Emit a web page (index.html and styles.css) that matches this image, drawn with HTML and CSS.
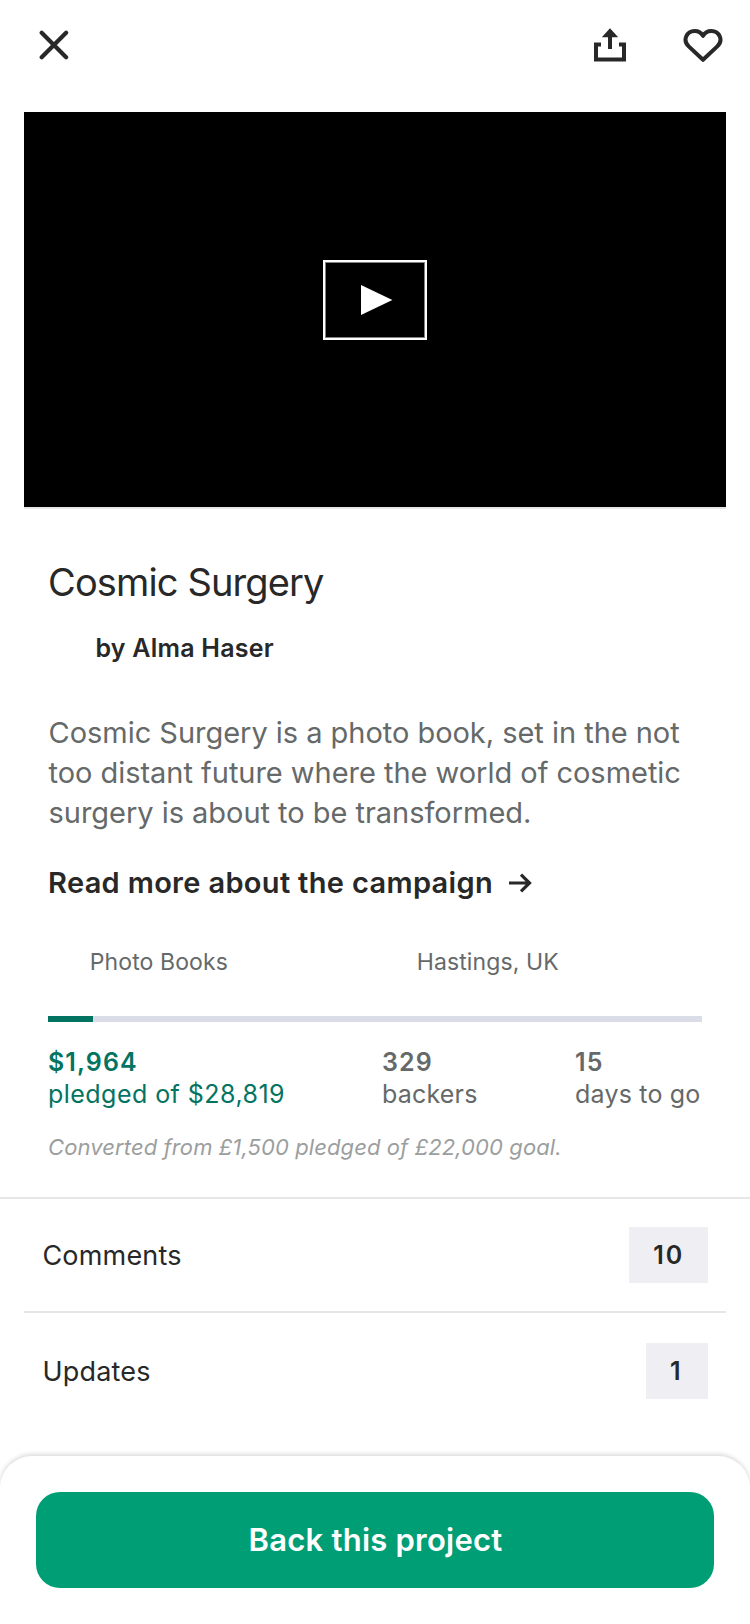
FILE: index.html
```html
<!DOCTYPE html>
<html lang="en">
<head>
<meta charset="utf-8">
<title>Cosmic Surgery</title>
<link rel="stylesheet" href="styles.css">
</head>
<body>
<div class="screen">
  <header class="topbar">
    <svg class="icon-close" width="32" height="32" viewBox="0 0 32 32"><path d="M3.7 2.8 28.1 27.2M28.1 2.8 3.7 27.2"/></svg>
    <div class="topbar-actions">
      <svg class="icon-share" width="34" height="36" viewBox="0 0 34 36"><path class="tray" d="M8 16.4H3V31.6H31V16.4H26"/><path class="arrow" d="M17 .2 25.2 9.3H19V21H15V9.3H8.8Z"/></svg>
      <svg class="icon-heart" width="42" height="38" viewBox="0 0 42 38"><path d="M21 32.8 6.7 19.4C3.6 16.5 2.9 12.7 4.2 9.5 5.7 5.8 8.9 4 12.7 4 16.3 4 19.2 5.6 21 8.9 22.8 5.6 25.7 4 29.3 4 33.1 4 36.3 5.8 37.8 9.5 39.1 12.7 38.4 16.5 35.3 19.4Z"/></svg>
    </div>
  </header>

  <div class="video">
    <button class="play" aria-label="Play">
      <svg width="32" height="30" viewBox="0 0 32 30"><path d="M0 0 31.4 15 0 30Z"/></svg>
    </button>
  </div>

  <main class="project">
    <h1 class="title">Cosmic Surgery</h1>
    <p class="creator">by Alma Haser</p>
    <p class="blurb">Cosmic Surgery is a photo book, set in the not<br>too distant future where the world of cosmetic<br>surgery is about to be transformed.</p>
    <a class="read-more">Read more about the campaign
      <svg width="24" height="20" viewBox="0 0 24 20"><path d="M1 10H21.5M13 1.7 21.5 10 13 18.3"/></svg>
    </a>
    <div class="tags"><span>Photo Books</span><span>Hastings, UK</span></div>
    <div class="progress"><div class="progress-fill"></div></div>
    <div class="stats">
      <div class="stat pledged"><b>$1,964</b><span class="amount">pledged of $28,819</span></div>
      <div class="stat"><b>329</b><span>backers</span></div>
      <div class="stat"><b>15</b><span>days to go</span></div>
    </div>
    <p class="converted">Converted from £1,500 pledged of £22,000 goal.</p>
  </main>

  <section class="links">
    <div class="row"><span>Comments</span><b class="badge">10</b></div>
    <div class="row row-last"><span>Updates</span><b class="badge">1</b></div>
  </section>

  <footer class="sheet">
    <button class="back-button">Back this project</button>
  </footer>
</div>
</body>
</html>
```
FILE: styles.css
```css
* { box-sizing: border-box; }
body { margin: 0; background: #fff; color: #282828; font-family: Inter, "Liberation Sans", sans-serif; }
h1, p { margin: 0; font-weight: 400; }
button { border: 0; padding: 0; font: inherit; }
svg { display: block; }
.screen { display: flex; flex-direction: column; width: 750px; height: 1624px; overflow: hidden; }

.topbar { display: flex; justify-content: space-between; align-items: flex-start; height: 112px; padding: 26px 26px 0 38px; }
.topbar-actions { display: flex; gap: 55px; }
.icon-close { margin-top: 4px; fill: none; stroke: #282828; stroke-width: 4.2; stroke-linecap: round; }
.icon-share { margin-top: 2px; fill: #282828; }
.icon-share .tray { fill: none; stroke: #282828; stroke-width: 4; }
.icon-heart { margin-top: 0.5px; fill: none; stroke: #282828; stroke-width: 4; stroke-linejoin: round; }

.video { display: flex; align-items: center; justify-content: center; height: 397px; margin: 0 24px; background: #000 padding-box; border-bottom: 2px solid #e6e6e6; padding-bottom: 19px; }
.play { display: flex; width: 104px; height: 80px; padding: 23px 0 0 36px; background: #000; border: 2px solid #fff; box-shadow: inset 0 0 0 1px #808080; }
.play svg { fill: #fff; }

.project { display: flex; flex-direction: column; height: 690px; padding: 49px 48px 0; color: #656969; border-bottom: 2px solid #e6e6e6; }
.title { font-size: 38px; line-height: 48px; letter-spacing: -0.87px; color: #282828; }
.creator { margin: 26px 0 0 47.5px; font-size: 25px; line-height: 32px; letter-spacing: 0.22px; font-weight: 600; color: #282828; }
.blurb { margin-top: 49px; font-size: 29px; line-height: 40px; letter-spacing: -0.03px; padding-left: 0.5px; white-space: nowrap; }
.read-more { display: flex; align-items: center; gap: 15px; margin-top: 30px; font-size: 29px; line-height: 40px; letter-spacing: 0.33px; font-weight: 600; color: #282828; }
.read-more svg { fill: none; stroke: #282828; stroke-width: 3.2; }
.tags { display: grid; grid-template-columns: 327px 1fr; margin-top: 43px; padding-left: 41.8px; font-size: 23px; line-height: 32px; letter-spacing: 0.1px; }
.progress { height: 6px; margin-top: 38px; background: #dadde7; }
.progress-fill { width: 44.5px; height: 6px; background: #037362; }
.stats { display: grid; grid-template-columns: 334px 193px 1fr; margin-top: 24px; font-size: 25px; line-height: 32px; letter-spacing: 0.2px; }
.stat { display: flex; flex-direction: column; white-space: nowrap; }
.stat b { font-weight: 600; letter-spacing: 1.1px; }
.pledged { color: #037362; }
.amount { letter-spacing: 0.46px; }
.converted { margin-top: 23px; font-size: 22px; line-height: 28px; letter-spacing: 0.1px; font-style: italic; color: #9b9e9e; }

.links { display: flex; flex-direction: column; height: 257px; padding: 0 24px; }
.row { display: flex; align-items: center; justify-content: space-between; height: 114px; padding: 0 18px 0 18.4px; font-size: 27px; letter-spacing: 0.2px; border-bottom: 2px solid #e6e6e6; }
.row-last { height: 116px; border-bottom: 0; }
.badge { min-width: 62px; height: 56px; padding: 0 24px; font-size: 25px; line-height: 56px; letter-spacing: 1.8px; font-weight: 600; background: #efeef3; }

.sheet { display: flex; height: 168px; padding: 36px; background: #fff; border-radius: 32px; box-shadow: 0 -2px 4px rgba(0, 0, 0, 0.14); clip-path: inset(-8px 0 36px 0); }
.back-button { flex: 1; height: 96px; padding: 0 0 2px 1px; border-radius: 24px; background: #009e74; color: #fff; font-size: 31px; font-weight: 600; letter-spacing: 0.23px; }
```
